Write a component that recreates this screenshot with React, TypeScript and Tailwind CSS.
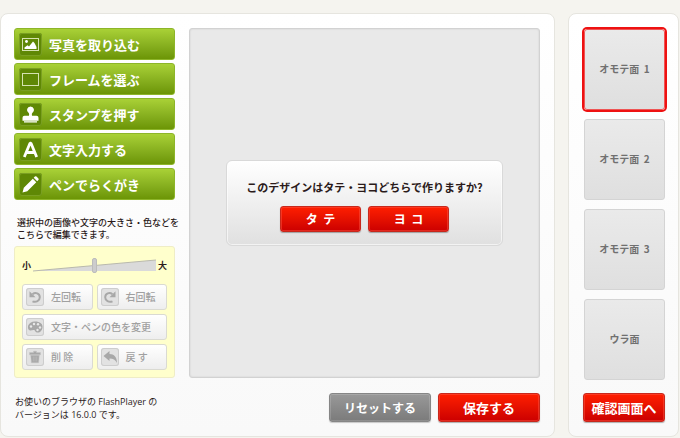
import { useState } from 'react';
import type { ReactNode } from 'react';

const jp = "font-['Noto_Sans_CJK_JP',sans-serif]";
const red = 'rounded-[3px] border border-[#c8281c] bg-linear-to-b from-[#ff1e00] to-[#cc0000] font-bold text-white shadow-[inset_0_0_0_1px_rgba(255,90,70,0.45),0_1px_1px_rgba(0,0,0,0.3)]';

const tools: { label: string; icon: ReactNode }[] = [
  {
    label: '写真を取り込む',
    icon: (
      <>
        <rect x="3.500" y="5.500" width="16" height="12" fill="none" stroke="#d5e2b0" />
        <path d="M5.500 16v-1.500l3-2.300 1.500 1.300 4-5 1.500 1.500L17.500 14v2z" fill="#fff" />
        <circle cx="7.500" cy="8.500" r="1.400" fill="#fff" />
      </>
    ),
  },
  { label: 'フレームを選ぶ', icon: <rect x="3.500" y="5.500" width="16" height="12" fill="none" stroke="#d5e2b0" /> },
  {
    label: 'スタンプを押す',
    icon: <path d="M11.500 3.500a3.500 3.500 0 0 1 1.800 6.500c-.5.500-.5 1.500-.3 2.700h4.500q2 0 2 2v3H3.500v-3q0-2 2-2H10c.2-1.200.2-2.200-.3-2.700a3.500 3.500 0 0 1 1.800-6.500zM5 18.300h13v1.300H5z" fill="#fff" />,
  },
  { label: '文字入力する', icon: <path d="M5.300 19 11 5.200h1L17.700 19M8 14.500h7" fill="none" stroke="#fff" strokeWidth="2.800" strokeLinejoin="bevel" /> },
  {
    label: 'ペンでらくがき',
    icon: <path d="M3.500 19.500l1.300-4.800 9-9 3.500 3.500-9 9zM14.700 4.800l1.200-1.200q.8-.7 1.600 0l1.900 1.900q.7.800 0 1.600l-1.200 1.200z" fill="#fff" />,
  },
];

const faces = ['オモテ面\u00a0\u00a01', 'オモテ面\u00a0\u00a02', 'オモテ面\u00a0\u00a03', 'ウラ面'];

const turnLeft = (
  <>
    <path d="M6.500 6.200C9.500 3.700 13.800 5.300 13.800 9.300c0 3.500-3.800 5.500-7.300 4" fill="none" stroke="currentColor" strokeWidth="2" />
    <path d="M3.500 3.300v6h6z" fill="currentColor" />
  </>
);

function EditButton({ label, icon, wide }: { label: string; icon: ReactNode; wide?: boolean }) {
  return (
    <button className={`flex h-[26px] items-center gap-[7px] rounded-[3px] border border-[#dadad2] bg-linear-to-b from-white to-[#eeeeee] pl-[3px] text-[10px] leading-none font-medium text-[#a0a0a0] ${wide ? 'col-span-2' : ''}`}>
      <svg viewBox="0 0 18 18" className="size-[18px] shrink-0 rounded-[3px] bg-[#e2e2e2] text-[#a8a8a8] shadow-[inset_0_0_0_1px_#cdcdcd]">{icon}</svg>
      <span className="whitespace-nowrap">{label}</span>
    </button>
  );
}

export default function App() {
  const [face, setFace] = useState(0);
  const [size, setSize] = useState(50);

  return (
    <div className={`flex min-h-screen items-start gap-[13px] bg-[#f5f4ef] pt-[13px] pr-px text-[#2b1a1a] ${jp}`}>
      <main className="min-w-0 flex-1 rounded-lg border border-[#e6e5df] bg-linear-to-b from-white to-[#f9f9f9] p-[14px] pl-[13px]">
        <div className="flex gap-[14px]">
          <div className="flex w-[161px] shrink-0 flex-col">
            <nav className="flex flex-col gap-[3px]">
              {tools.map(t => (
                <button key={t.label} className="flex h-8 items-center gap-[7px] rounded-[3px] border border-[#8db529] bg-linear-to-b from-[#a9d136] to-[#6c9505] pl-1 text-[13px] leading-none font-bold text-white">
                  <svg viewBox="0 0 23 23" className="size-[23px] rounded-[3px] bg-[#5f8805] shadow-[inset_0_0_0_1px_#7a9f22]">{t.icon}</svg>
                  <span>{t.label}</span>
                </button>
              ))}
            </nav>
            <p className="mt-[17px] ml-[3px] text-[9px] leading-3 font-medium whitespace-nowrap">
              選択中の画像や文字の大きさ・色などを<br />こちらで編集できます。
            </p>
            <div className="mt-[5px] rounded-[3px] border border-[#efedc6] bg-[#ffffcc] px-[7px] pt-2 pb-[7px]">
              <div className="mb-2 flex h-[21px] items-center text-[9px] leading-none font-bold">
                <label htmlFor="size">小</label>
                <div className="relative mx-[2px] h-4 flex-1">
                  <svg viewBox="0 0 124 16" preserveAspectRatio="none" className="absolute inset-0 size-full">
                    <path d="M0 13 124 2v11z" fill="#dadada" />
                    <path d="M0 13 124 2" stroke="#b8b8ac" />
                  </svg>
                  <input
                    id="size" type="range" value={size} onChange={e => setSize(Number(e.target.value))}
                    className="absolute inset-0 size-full appearance-none bg-transparent [&::-webkit-slider-thumb]:h-[15px] [&::-webkit-slider-thumb]:w-[5px] [&::-webkit-slider-thumb]:appearance-none [&::-webkit-slider-thumb]:rounded-[2px] [&::-webkit-slider-thumb]:border [&::-webkit-slider-thumb]:border-[#bcbcbc] [&::-webkit-slider-thumb]:bg-[#cccccc]"
                  />
                </div>
                <label htmlFor="size">大</label>
              </div>
              <div className="grid grid-cols-2 gap-1">
                <EditButton label="左回転" icon={turnLeft} />
                <EditButton label="右回転" icon={<g transform="matrix(-1 0 0 1 18 0)">{turnLeft}</g>} />
                <EditButton
                  wide label="文字・ペンの色を変更"
                  icon={
                    <>
                      <path d="M9 3.500c5 0 8 2.500 7.500 6-.3 3-2.500 5.500-5.500 5-2-.3-1.500-2.500-3.500-2.500-1.500 0-2.500 1-4 .3C.500 10.800 1.500 3.500 9 3.500z" fill="currentColor" />
                      <g fill="#e8e8e8"><circle cx="5" cy="8.500" r="1.200" /><circle cx="8" cy="6" r="1.200" /><circle cx="12" cy="6.300" r="1.200" /><circle cx="14" cy="9.500" r="1.200" /><circle cx="11.500" cy="12" r="1.200" /></g>
                    </>
                  }
                />
                <EditButton label="削 除" icon={<path d="M3.500 4.500h4V3.200h3v1.300h4V6.700h-11zM4.700 7.200h8.600l-.7 7.500H5.400zM7.300 8.500v5M9 8.500v5M10.700 8.500v5" fill="currentColor" stroke="#c4c4c4" strokeWidth=".5" />} />
                <EditButton label="戻 す" icon={<path d="M2.500 8 8.500 3v3c4.500 0 7.500 3 7.500 9-1.500-3.300-4-4.500-7.500-4.500V13z" fill="currentColor" />} />
              </div>
            </div>
          </div>
          <section className="flex flex-1 items-center justify-center rounded-[3px] border border-[#d2d2d2] bg-[#e9e9e9] shadow-[inset_0_0_2px_rgba(0,0,0,0.12)]">
            <div className="flex w-[277px] flex-col items-center gap-[11px] rounded-md border border-[#d9d9d9] bg-linear-to-b from-white to-[#e0e0e0] pt-[18px] pb-[13px] shadow-[inset_0_0_0_1px_rgba(255,255,255,0.6)]">
              <p className="text-[11px] leading-4 font-bold whitespace-nowrap">このデザインはタテ・ヨコどちらで作りますか?</p>
              <div className="flex gap-[7px]">
                <button className={`${red} h-[26px] w-[81px] text-[12px] leading-none`}>タ{'\u00a0\u00a0'}テ</button>
                <button className={`${red} h-[26px] w-[81px] text-[12px] leading-none`}>ヨ{'\u00a0\u00a0'}コ</button>
              </div>
            </div>
          </section>
        </div>
        <footer className="mt-[15px] flex items-center gap-[7px]">
          <p className="mr-auto ml-px font-['Open_Sans','Noto_Sans_CJK_JP',sans-serif] text-[9px] leading-[13px]">
            お使いのブラウザの FlashPlayer の<br />バージョンは 16.0.0 です。
          </p>
          <button className="h-[29px] w-[102px] rounded-[3px] border border-[#868686] bg-linear-to-b from-[#999999] to-[#7b7b7b] text-[12px] leading-none font-bold text-white shadow-[inset_0_0_0_1px_rgba(255,255,255,0.15),0_1px_1px_rgba(0,0,0,0.2)]">リセットする</button>
          <button className={`${red} h-[29px] w-[102px] text-[13px] leading-none`}>保存する</button>
        </footer>
      </main>
      <aside className="flex w-[111px] shrink-0 flex-col gap-[13px] rounded-lg border border-[#e6e5df] bg-linear-to-b from-white to-[#f9f9f9] p-[14px] pr-[13px]">
        <div className="flex flex-col gap-[9px] pt-px pl-px">
          {faces.map((f, i) => (
            <button
              key={f} onClick={() => setFace(i)}
              className={`h-[81px] rounded-[3px] border bg-linear-to-b from-[#eaeaea] to-[#dfdfdf] pb-[2px] text-[10px] font-bold text-[#707070] ${i === face ? 'border-[#ee5555] ring-2 ring-[#ee1111]' : 'border-[#d4d4d4]'}`}
            >
              {f}
            </button>
          ))}
        </div>
        <button className={`${red} h-[29px] text-[13px] leading-none whitespace-nowrap`}>確認画面へ</button>
      </aside>
    </div>
  );
}
